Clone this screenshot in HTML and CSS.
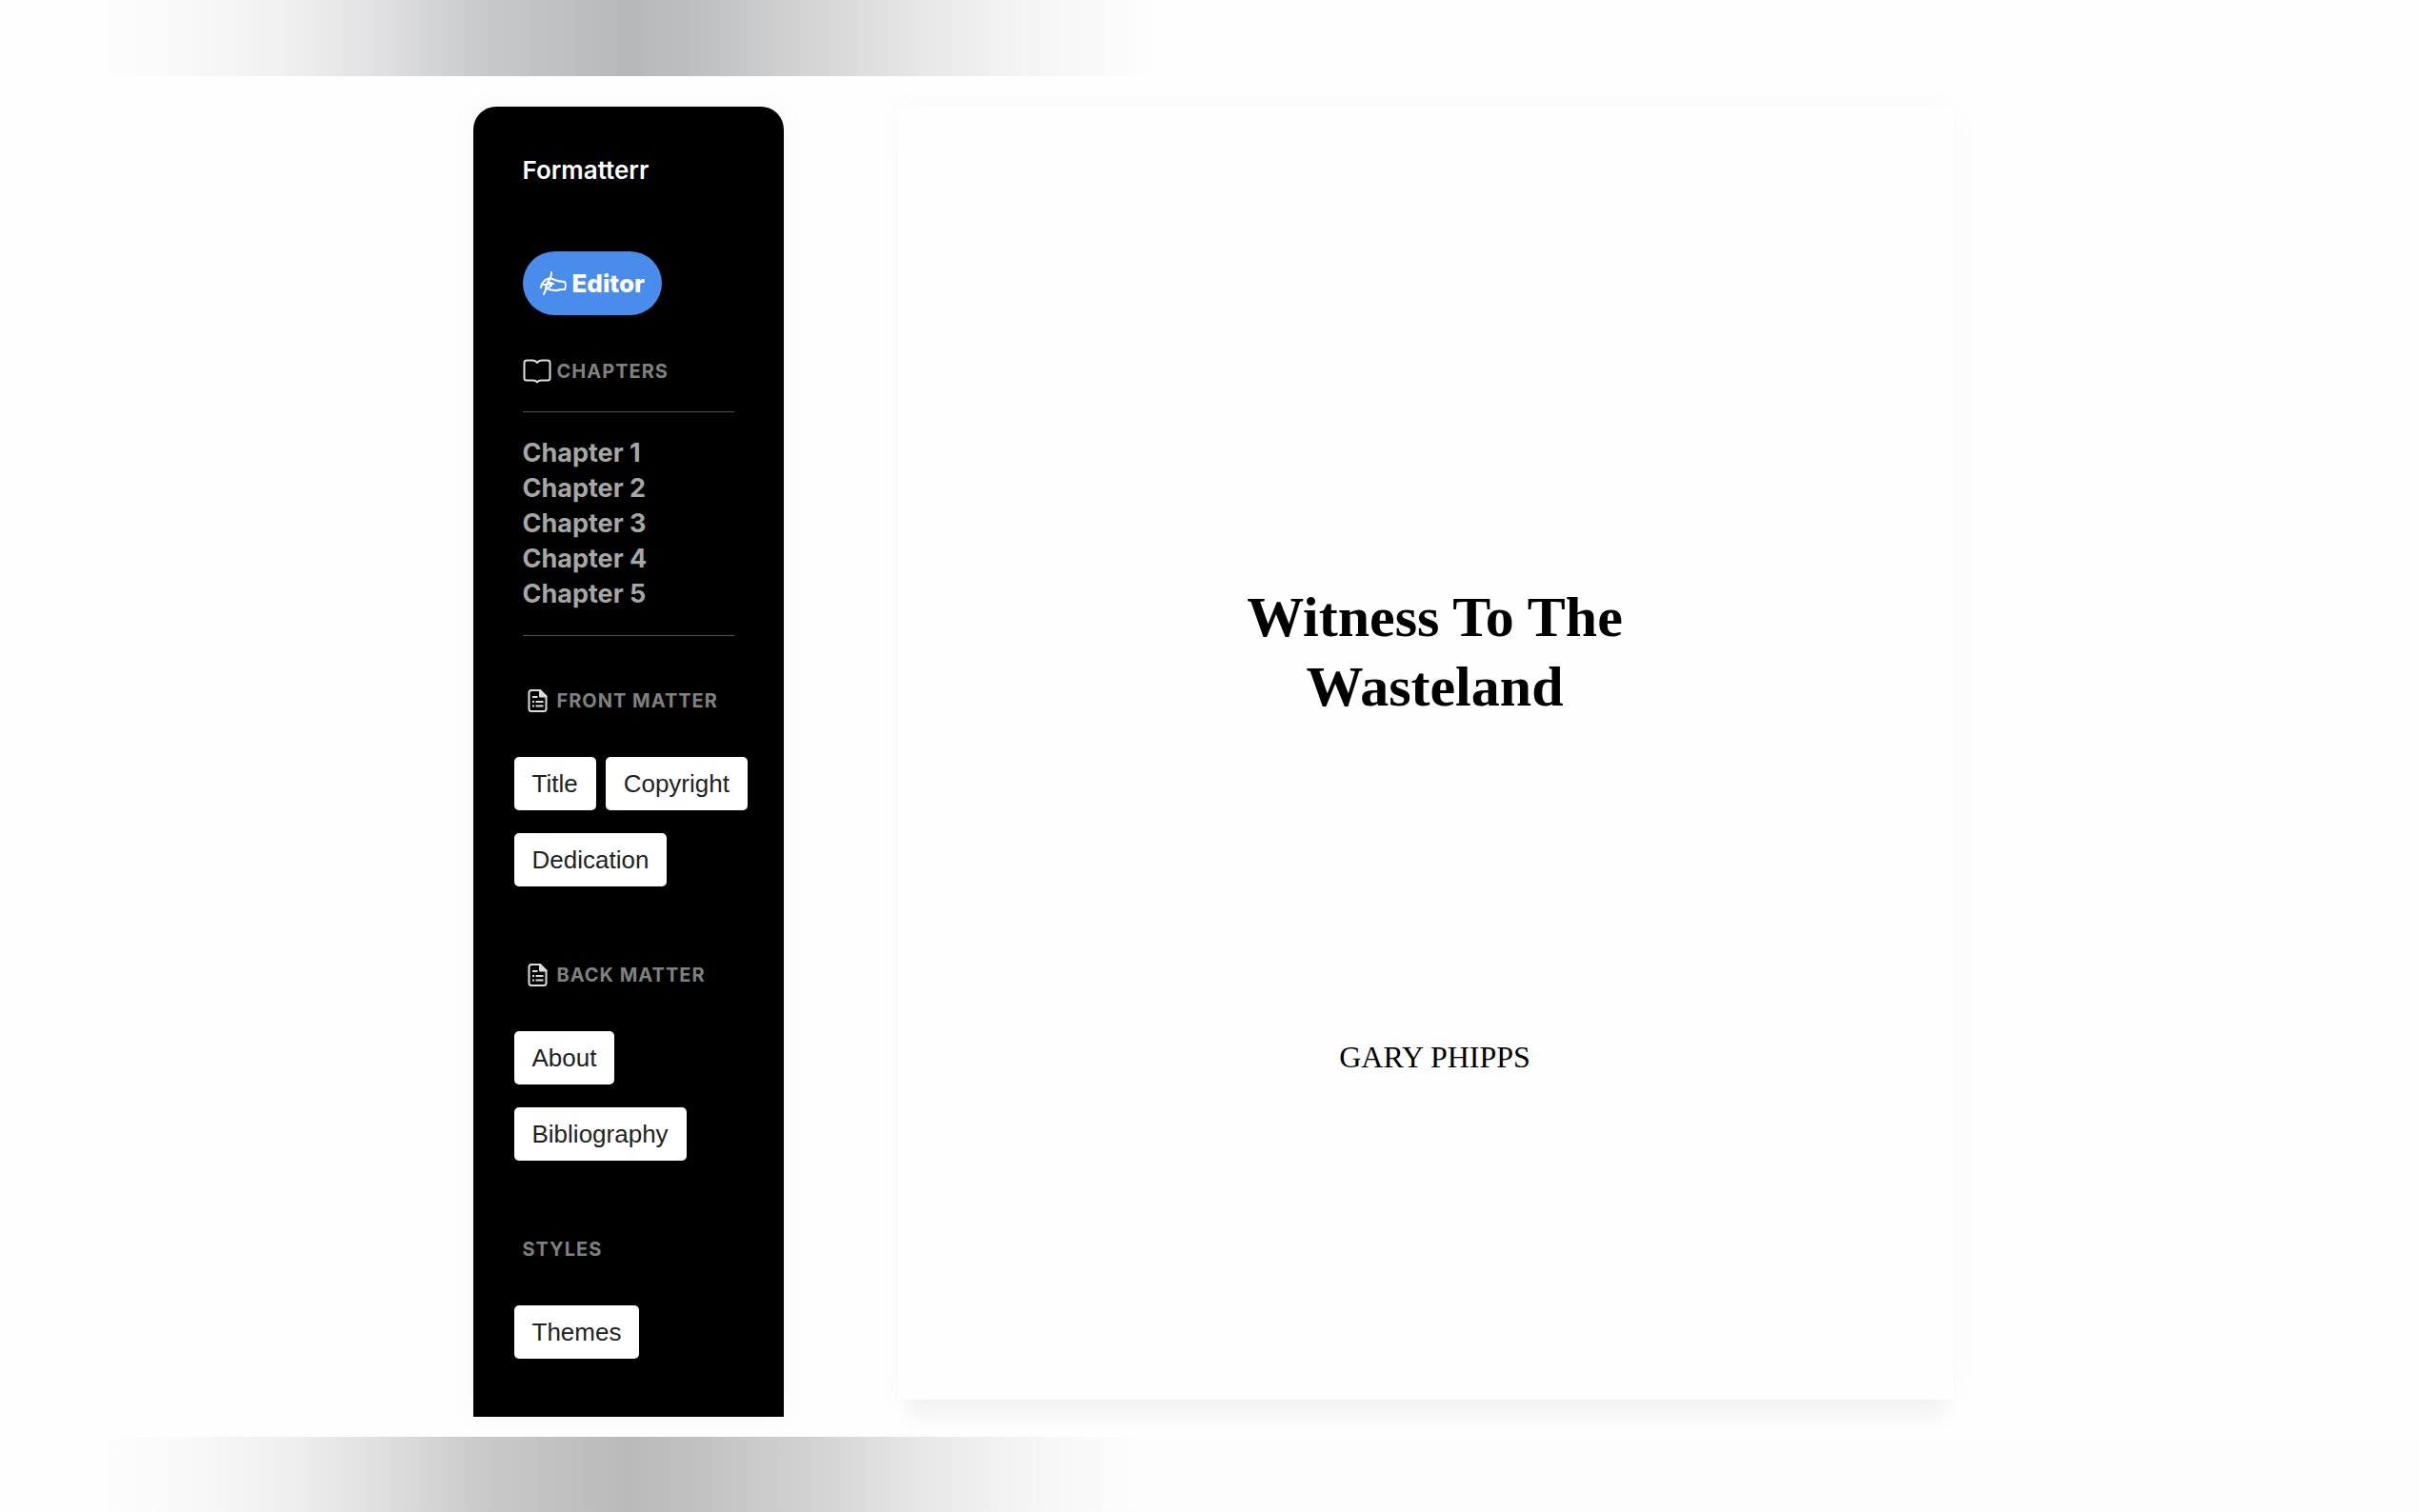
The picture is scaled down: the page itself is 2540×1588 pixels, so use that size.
FILE: index.html
```html
<!DOCTYPE html>
<html lang="en">
<head>
    <meta charset="UTF-8">
    <meta name="viewport" content="width=device-width, initial-scale=1.0">
    <title>Formatterr</title>
    <link rel="stylesheet" href="styles.css">
</head>
<body>
    <div class="band band-top"></div>

    <div class="workspace">
        <aside class="sidebar">
            <h1 class="brand">Formatterr</h1>

            <button class="editor-btn" type="button">
                <svg class="icon-hand" viewBox="0 0 28 26" aria-hidden="true">
                    <path d="M12 1 C12.500 5 10 9 7.500 13 C6 16 6.500 20 4 24 M1 17 C2 11 5 8 11 7 C15 9 18 11 26 11 C27 13 27 17 26 19 L21 19 C17 21 12 20 7 18 M4 14 L14 13 M8 11 L14 13 M7 18 L12 15"/>
                </svg>
                <span>Editor</span>
            </button>

            <h2 class="heading">
                <svg class="icon-book" viewBox="0 0 30 26" aria-hidden="true">
                    <path d="M15 4 C14 2.500 12 1.500 10 1.500 H4 C2 1.500 1.500 2.500 1.500 4 V20 C1.500 22 2.500 22.500 4 22.500 H11 C13 22.500 14 23 15 24.500 C16 23 17 22.500 19 22.500 H26 C27.500 22.500 28.500 22 28.500 20 V4 C28.500 2.500 28 1.500 26 1.500 H20 C18 1.500 16 2.500 15 4 Z"/>
                </svg>
                Chapters
            </h2>
            <ul class="chapters">
                <li><a href="#chapter-1">Chapter 1</a></li>
                <li><a href="#chapter-2">Chapter 2</a></li>
                <li><a href="#chapter-3">Chapter 3</a></li>
                <li><a href="#chapter-4">Chapter 4</a></li>
                <li><a href="#chapter-5">Chapter 5</a></li>
            </ul>

            <section class="group">
                <h2 class="heading">
                    <svg class="icon-doc" viewBox="0 0 30 26" aria-hidden="true">
                        <path d="M18 2 H9 C7.500 2 6.500 3 6.500 4.500 V21.500 C6.500 23 7.500 24 9 24 H22 C23.500 24 24.500 23 24.500 21.500 V8.500 Z"/>
                        <path class="fold" d="M18 2 V8.500 H24.500 Z"/>
                        <path class="lines" d="M10 9 H15.500 M10 14 H12 M13.500 14 H21.500 M10 18.500 H12 M13.500 18.500 H21.500"/>
                    </svg>
                    Front Matter
                </h2>
                <div class="tags">
                    <button type="button">Title</button>
                    <button type="button">Copyright</button>
                    <button type="button">Dedication</button>
                </div>
            </section>

            <section class="group">
                <h2 class="heading">
                    <svg class="icon-doc" viewBox="0 0 30 26" aria-hidden="true">
                        <path d="M18 2 H9 C7.500 2 6.500 3 6.500 4.500 V21.500 C6.500 23 7.500 24 9 24 H22 C23.500 24 24.500 23 24.500 21.500 V8.500 Z"/>
                        <path class="fold" d="M18 2 V8.500 H24.500 Z"/>
                        <path class="lines" d="M10 9 H15.500 M10 14 H12 M13.500 14 H21.500 M10 18.500 H12 M13.500 18.500 H21.500"/>
                    </svg>
                    Back Matter
                </h2>
                <div class="tags">
                    <button type="button">About</button>
                    <button type="button">Bibliography</button>
                </div>
            </section>

            <section class="group">
                <h2 class="heading">Styles</h2>
                <div class="tags">
                    <button type="button">Themes</button>
                </div>
            </section>
        </aside>

        <main class="page">
            <h2 class="book-title">Witness To The Wasteland</h2>
            <p class="author">GARY PHIPPS</p>
        </main>
    </div>

    <div class="band band-bottom"></div>
</body>
</html>
```
FILE: styles.css
```css
* {
    box-sizing: border-box;
}

body {
    margin: 0;
    min-height: 100vh;
    display: flex;
    flex-direction: column;
    background-color: #fefefe;
    font-family: Inter, Arial, sans-serif;
}

.band {
    height: 80px;
    flex-shrink: 0;
    z-index: 1;
}

.band-top {
    background: linear-gradient(to right, #fefefe 4%, #f8f8f8 8%, #f0f0f0 12%, #dfdfe1 16%, #c8c9cb 20%, #b7b8bb 26%, #bfc0c1 29%, #d2d2d3 33%, #e7e7e7 38%, #f4f4f4 42%, #fefefe 48%);
}

.band-bottom {
    height: 79px;
    background: linear-gradient(to right, #fefefe 4%, #f8f8f8 8%, #efefef 12%, #dedede 16%, #c9c9c9 20%, #bababa 26%, #c2c2c2 29%, #d4d4d4 34%, #e7e7e7 38%, #f4f4f4 42%, #fdfdfd 47%);
}

.workspace {
    flex: 1;
    display: grid;
    grid-template-columns: 326px minmax(0, 1108px);
    gap: 120px;
    justify-content: center;
    padding: 32px 0 21px 7px;
}

.sidebar {
    padding: 47px 35px 60px 43px;
    background-color: #000;
    border-radius: 24px 24px 0 0;
    box-shadow: 0 0 32px rgba(0, 0, 0, 0.04);
}

.brand {
    margin: 0 0 65px 9px;
    font-size: 26px;
    line-height: 40px;
    font-weight: 600;
    color: #fff;
}

.editor-btn {
    display: flex;
    align-items: center;
    gap: 6px;
    height: 67px;
    margin: 0 0 41px 9px;
    padding: 0 18px;
    border: 0;
    border-radius: 34px;
    background-color: #4a8ceb;
    color: #fff;
    font-family: inherit;
    font-size: 26px;
    font-weight: 800;
    cursor: pointer;
}

svg {
    flex-shrink: 0;
    fill: none;
    stroke: #ddd;
    stroke-width: 2;
    stroke-linecap: round;
    stroke-linejoin: round;
}

.icon-hand {
    width: 28px;
    height: 26px;
    stroke: #fff;
}

.icon-book,
.icon-doc {
    width: 30px;
    height: 26px;
}

.icon-doc .fold {
    fill: #ddd;
}

.icon-doc .lines {
    stroke-linecap: butt;
}

.heading {
    display: flex;
    align-items: center;
    gap: 6px;
    margin: 0 0 0 9px;
    font-size: 20px;
    line-height: 36px;
    font-weight: 700;
    letter-spacing: 1px;
    text-transform: uppercase;
    color: #808080;
}

.chapters {
    margin: 24px 17px 50px 9px;
    padding: 24px 0 25px;
    border-top: 1px solid #555;
    border-bottom: 1px solid #555;
    list-style: none;
}

.chapters a {
    display: block;
    font-size: 27px;
    line-height: 37px;
    font-weight: 700;
    color: #a6a6a6;
    text-decoration: none;
}

.group + .group {
    margin-top: 75px;
}

.tags {
    display: flex;
    flex-wrap: wrap;
    gap: 24px 10px;
    margin-top: 41px;
}

.tags button {
    height: 56px;
    padding: 0 19px;
    border: 0;
    border-radius: 5px;
    background-color: #fff;
    color: #222;
    font-family: "Liberation Sans", Arial, sans-serif;
    font-size: 26px;
    cursor: pointer;
}

.page {
    display: flex;
    flex-direction: column;
    align-items: center;
    margin-bottom: 18px;
    padding: 500px 0 0 20px;
    background-color: #fefefe;
    box-shadow: 0 0 32px rgba(0, 0, 0, 0.03), 0 32px 16px -8px rgba(0, 0, 0, 0.03);
    font-family: "Liberation Serif", serif;
    color: #000;
}

.book-title {
    width: 440px;
    margin: 0;
    font-size: 60px;
    line-height: 73px;
    font-weight: 700;
    text-align: center;
}

.author {
    margin: 332px 0 0;
    font-size: 32px;
    line-height: 40px;
    font-weight: 400;
}
```
